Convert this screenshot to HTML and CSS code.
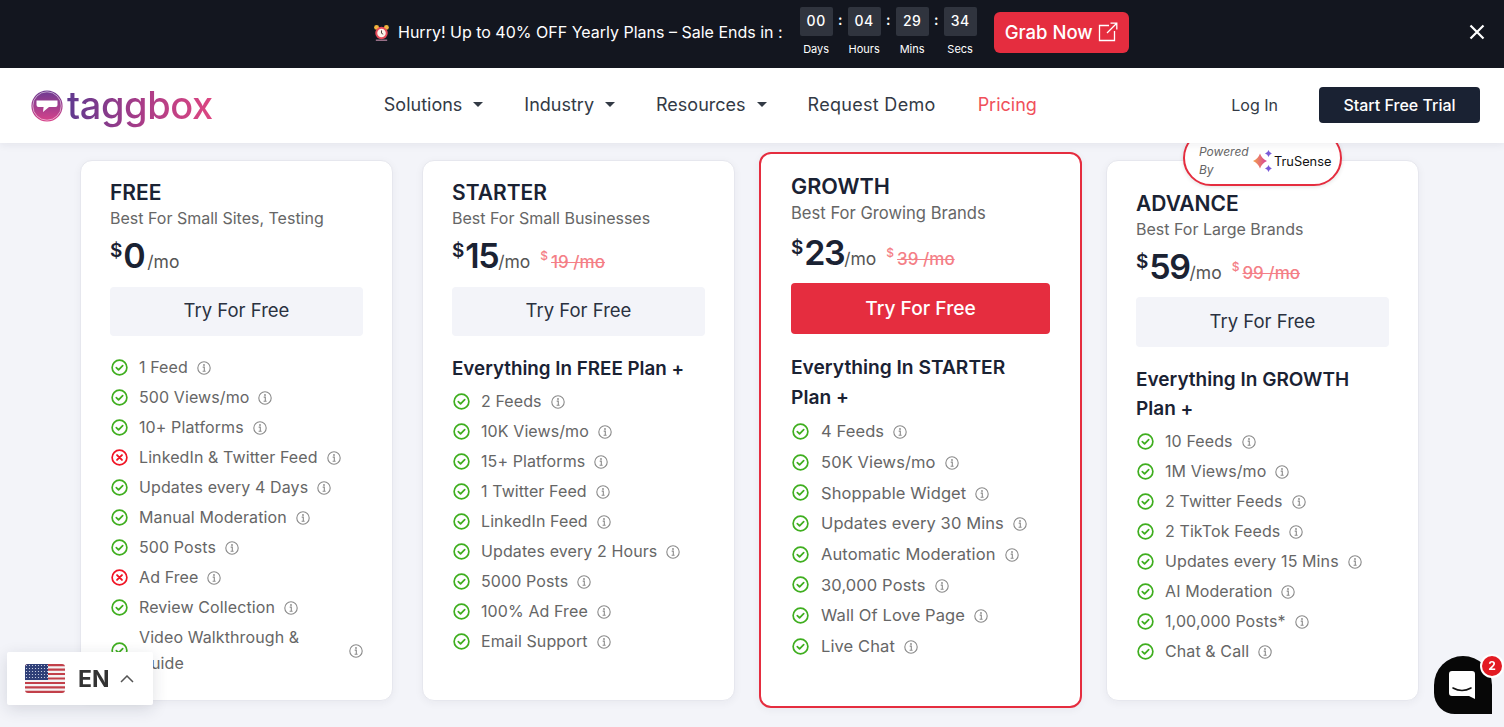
FILE: index.html
```html
<!DOCTYPE html>
<html lang="en">
<head>
<meta charset="utf-8">
<title>Taggbox Pricing</title>
<link rel="stylesheet" href="styles.css">
</head>
<body>
<svg class="sprite" width="0" height="0" aria-hidden="true">
  <symbol id="check" viewBox="0 0 18 18"><circle cx="9" cy="9" r="7.8" fill="none" stroke="#3fae1f" stroke-width="1.8"/><path d="M5.600 9.200l2.400 2.400 4.400-4.600" fill="none" stroke="#3fae1f" stroke-width="1.8" stroke-linecap="round" stroke-linejoin="round"/></symbol>
  <symbol id="cross" viewBox="0 0 18 18"><circle cx="9" cy="9" r="7.8" fill="none" stroke="#f01424" stroke-width="1.8"/><path d="M6.400 6.400l5.200 5.200M11.600 6.400l-5.200 5.200" fill="none" stroke="#f01424" stroke-width="2" stroke-linecap="round"/></symbol>
  <symbol id="info" viewBox="0 0 14 14"><circle cx="7" cy="7" r="6.200" fill="none" stroke="#8a8a8a" stroke-width="1.100"/><path d="M5.700 6.100H7.300V10M5.600 10.200H8.600" fill="none" stroke="#8a8a8a" stroke-width="1.100"/><circle cx="7" cy="4" r=".9" fill="#8a8a8a"/></symbol>
</svg>

<div class="promo">
  <svg class="clock" viewBox="0 0 18 18" width="17" height="17" aria-hidden="true">
    <circle cx="3.800" cy="3.600" r="2.600" fill="#f3b63f"/><circle cx="14.200" cy="3.600" r="2.600" fill="#f3b63f"/>
    <path d="M3 16.600h12v1H3z" fill="#e9a7c8"/>
    <circle cx="9" cy="9.600" r="6.600" fill="#e84b5a"/><circle cx="9" cy="9.600" r="4.500" fill="#fdf3ea"/>
    <path d="M9 6.800v3l1.800 1" stroke="#4a3a3a" stroke-width="1" fill="none"/>
  </svg>
  <span class="promo-text">Hurry! Up to 40% OFF Yearly Plans – Sale Ends in :</span>
  <div class="timer">
    <div class="unit"><b>00</b><small>Days</small></div><i>:</i>
    <div class="unit"><b>04</b><small>Hours</small></div><i>:</i>
    <div class="unit"><b>29</b><small>Mins</small></div><i>:</i>
    <div class="unit"><b>34</b><small>Secs</small></div>
  </div>
  <a class="grab">Grab Now
    <svg viewBox="0 0 20 20" width="20" height="20" aria-hidden="true"><path d="M11 3.500H1.500v15h15V9M9 11L18.500 1.500M12.500 1.200h6.300v6.300" fill="none" stroke="#fff" stroke-width="1.300"/></svg>
  </a>
  <svg class="close" viewBox="0 0 16 16" width="16" height="16" aria-hidden="true"><path d="M1.500 1.500l13 13M14.500 1.500l-13 13" stroke="#fff" stroke-width="2.200"/></svg>
</div>

<header class="header">
  <a class="logo">
    <svg viewBox="0 0 32 32" width="32" height="32" aria-hidden="true">
      <defs><linearGradient id="lg" x1="0" y1="0" x2="0" y2="1"><stop offset="0" stop-color="#6b3a92"/><stop offset="1" stop-color="#d9438a"/></linearGradient></defs>
      <circle cx="16" cy="16" r="15.600" fill="url(#lg)"/>
      <circle cx="16" cy="16" r="14.200" fill="none" stroke="#fff" stroke-opacity=".75" stroke-width=".7"/>
      <path d="M5.500 10.500h21v4.600q0 2-2 2h-6.500l-6 5 .6-5H7.500q-2 0-2-2z" fill="#fff"/>
    </svg>
    <span class="logo-text">taggbox</span>
  </a>
  <nav class="nav">
    <a class="drop">Solutions</a>
    <a class="drop">Industry</a>
    <a class="drop">Resources</a>
    <a class="demo">Request Demo</a>
    <a class="active">Pricing</a>
  </nav>
  <div class="actions">
    <a class="login">Log In</a>
    <a class="trial">Start Free Trial</a>
  </div>
</header>

<main class="plans">
  <section class="card card-free">
    <h2>FREE</h2>
    <p class="sub">Best For Small Sites, Testing</p>
    <div class="price"><sup>$</sup><strong>0</strong><span>/mo</span></div>
    <a class="try">Try For Free</a>
    <ul class="feats first">
      <li><svg class="ic"><use href="#check"/></svg><span>1 Feed</span><svg class="inf"><use href="#info"/></svg></li>
      <li><svg class="ic"><use href="#check"/></svg><span>500 Views/mo</span><svg class="inf"><use href="#info"/></svg></li>
      <li><svg class="ic"><use href="#check"/></svg><span>10+ Platforms</span><svg class="inf"><use href="#info"/></svg></li>
      <li><svg class="ic"><use href="#cross"/></svg><span>LinkedIn &amp; Twitter Feed</span><svg class="inf"><use href="#info"/></svg></li>
      <li><svg class="ic"><use href="#check"/></svg><span>Updates every 4 Days</span><svg class="inf"><use href="#info"/></svg></li>
      <li><svg class="ic"><use href="#check"/></svg><span>Manual Moderation</span><svg class="inf"><use href="#info"/></svg></li>
      <li><svg class="ic"><use href="#check"/></svg><span>500 Posts</span><svg class="inf"><use href="#info"/></svg></li>
      <li><svg class="ic"><use href="#cross"/></svg><span>Ad Free</span><svg class="inf"><use href="#info"/></svg></li>
      <li><svg class="ic"><use href="#check"/></svg><span>Review Collection</span><svg class="inf"><use href="#info"/></svg></li>
      <li class="wrap"><svg class="ic"><use href="#check"/></svg><span>Video Walkthrough &amp;<br>Guide</span><svg class="inf"><use href="#info"/></svg></li>
    </ul>
  </section>

  <section class="card card-starter">
    <h2>STARTER</h2>
    <p class="sub">Best For Small Businesses</p>
    <div class="price"><sup>$</sup><strong>15</strong><span>/mo</span><em><sup>$</sup><s>19 /mo</s></em></div>
    <a class="try">Try For Free</a>
    <h3>Everything In FREE Plan +</h3>
    <ul class="feats">
      <li><svg class="ic"><use href="#check"/></svg><span>2 Feeds</span><svg class="inf"><use href="#info"/></svg></li>
      <li><svg class="ic"><use href="#check"/></svg><span>10K Views/mo</span><svg class="inf"><use href="#info"/></svg></li>
      <li><svg class="ic"><use href="#check"/></svg><span>15+ Platforms</span><svg class="inf"><use href="#info"/></svg></li>
      <li><svg class="ic"><use href="#check"/></svg><span>1 Twitter Feed</span><svg class="inf"><use href="#info"/></svg></li>
      <li><svg class="ic"><use href="#check"/></svg><span>LinkedIn Feed</span><svg class="inf"><use href="#info"/></svg></li>
      <li><svg class="ic"><use href="#check"/></svg><span>Updates every 2 Hours</span><svg class="inf"><use href="#info"/></svg></li>
      <li><svg class="ic"><use href="#check"/></svg><span>5000 Posts</span><svg class="inf"><use href="#info"/></svg></li>
      <li><svg class="ic"><use href="#check"/></svg><span>100% Ad Free</span><svg class="inf"><use href="#info"/></svg></li>
      <li><svg class="ic"><use href="#check"/></svg><span>Email Support</span><svg class="inf"><use href="#info"/></svg></li>
    </ul>
  </section>

  <section class="card card-growth">
    <h2>GROWTH</h2>
    <p class="sub">Best For Growing Brands</p>
    <div class="price"><sup>$</sup><strong>23</strong><span>/mo</span><em><sup>$</sup><s>39 /mo</s></em></div>
    <a class="try">Try For Free</a>
    <h3>Everything In STARTER<br>Plan +</h3>
    <ul class="feats">
      <li><svg class="ic"><use href="#check"/></svg><span>4 Feeds</span><svg class="inf"><use href="#info"/></svg></li>
      <li><svg class="ic"><use href="#check"/></svg><span>50K Views/mo</span><svg class="inf"><use href="#info"/></svg></li>
      <li><svg class="ic"><use href="#check"/></svg><span>Shoppable Widget</span><svg class="inf"><use href="#info"/></svg></li>
      <li><svg class="ic"><use href="#check"/></svg><span>Updates every 30 Mins</span><svg class="inf"><use href="#info"/></svg></li>
      <li><svg class="ic"><use href="#check"/></svg><span>Automatic Moderation</span><svg class="inf"><use href="#info"/></svg></li>
      <li><svg class="ic"><use href="#check"/></svg><span>30,000 Posts</span><svg class="inf"><use href="#info"/></svg></li>
      <li><svg class="ic"><use href="#check"/></svg><span>Wall Of Love Page</span><svg class="inf"><use href="#info"/></svg></li>
      <li><svg class="ic"><use href="#check"/></svg><span>Live Chat</span><svg class="inf"><use href="#info"/></svg></li>
    </ul>
  </section>

  <section class="card card-advance">
    <div class="powered">
      <span class="pw-label">Powered<br>By</span>
      <svg viewBox="1 0 21 22" width="21" height="22" aria-hidden="true">
        <defs><linearGradient id="sp" x1="0" y1="0" x2="1" y2="0"><stop offset="0" stop-color="#f5a34a"/><stop offset="1" stop-color="#d63f9a"/></linearGradient></defs>
        <path d="M8 3.500Q10 9 15 11Q10 13 8 18.500Q6 13 1 11Q6 9 8 3.500z" fill="url(#sp)"/>
        <path d="M16.500 0q.7 2.800 3.500 3.500q-2.800.7-3.500 3.500q-.7-2.800-3.500-3.500q2.800-.7 3.500-3.500zM16.500 15q.7 2.800 3.500 3.500q-2.800.7-3.500 3.500q-.7-2.800-3.500-3.500q2.800-.7 3.500-3.500z" fill="#7a5ad8"/>
      </svg>
      <span class="pw-name">TruSense</span>
    </div>
    <h2>ADVANCE</h2>
    <p class="sub">Best For Large Brands</p>
    <div class="price"><sup>$</sup><strong>59</strong><span>/mo</span><em><sup>$</sup><s>99 /mo</s></em></div>
    <a class="try">Try For Free</a>
    <h3>Everything In GROWTH<br>Plan +</h3>
    <ul class="feats">
      <li><svg class="ic"><use href="#check"/></svg><span>10 Feeds</span><svg class="inf"><use href="#info"/></svg></li>
      <li><svg class="ic"><use href="#check"/></svg><span>1M Views/mo</span><svg class="inf"><use href="#info"/></svg></li>
      <li><svg class="ic"><use href="#check"/></svg><span>2 Twitter Feeds</span><svg class="inf"><use href="#info"/></svg></li>
      <li><svg class="ic"><use href="#check"/></svg><span>2 TikTok Feeds</span><svg class="inf"><use href="#info"/></svg></li>
      <li><svg class="ic"><use href="#check"/></svg><span>Updates every 15 Mins</span><svg class="inf"><use href="#info"/></svg></li>
      <li><svg class="ic"><use href="#check"/></svg><span>AI Moderation</span><svg class="inf"><use href="#info"/></svg></li>
      <li><svg class="ic"><use href="#check"/></svg><span>1,00,000 Posts*</span><svg class="inf"><use href="#info"/></svg></li>
      <li><svg class="ic"><use href="#check"/></svg><span>Chat &amp; Call</span><svg class="inf"><use href="#info"/></svg></li>
    </ul>
  </section>
</main>

<div class="lang">
  <svg class="flag" viewBox="0 0 40 29" width="40" height="29" aria-hidden="true">
    <defs><clipPath id="fc"><rect width="40" height="29" rx="3"/></clipPath>
    <pattern id="st" width="3" height="3" patternUnits="userSpaceOnUse"><rect width="3" height="3" fill="#2f3f78"/><circle cx="1.500" cy="1.500" r=".6" fill="#dfe3f0"/></pattern></defs>
    <g clip-path="url(#fc)">
      <rect width="40" height="29" fill="#f4f4f4"/>
      <path d="M0 1.100h40M0 5.600h40M0 10h40M0 14.500h40M0 19h40M0 23.400h40M0 27.900h40" stroke="#c2404a" stroke-width="2.200"/>
      <rect width="23" height="16" fill="url(#st)"/>
    </g>
  </svg>
  <span class="lang-code">EN</span>
  <svg viewBox="0 0 14 8" width="14" height="8" aria-hidden="true"><path d="M1 7l6-6 6 6" fill="none" stroke="#555" stroke-width="1.500"/></svg>
</div>

<div class="chat">
  <svg viewBox="0 0 26 28" width="26" height="28" aria-hidden="true"><path d="M3 0h20q3 0 3 3v25l-6-3H3q-3 0-3-3V3q0-3 3-3z" fill="#fff"/><path d="M4 17q9 5 18 0" fill="none" stroke="#111" stroke-width="1.600" stroke-linecap="round"/></svg>
</div>
<span class="chat-badge">2</span>
</body>
</html>
```

FILE: styles.css
```css
* { box-sizing: border-box; }
html, body { margin: 0; padding: 0; }
body {
  height: 727px;
  overflow: hidden;
  background: #f3f4f9;
  font-family: Inter, "Noto Sans", sans-serif;
  color: #1a2233;
}
a { display: block; }
.sprite { position: absolute; }

/* promo bar */
.promo {
  height: 68px;
  background: #13161f;
  color: #fff;
  display: flex;
  align-items: center;
  padding: 0 0 4px 373px;
  position: relative;
  z-index: 3;
}
.clock { flex: none; }
.promo-text { margin-left: 8px; font-size: 16px; white-space: nowrap; }
.timer { display: flex; margin: -2px 0 0 17px; align-items: flex-start; }
.timer i { width: 15px; text-align: center; font-style: normal; font-size: 14px; font-weight: 600; line-height: 26px; }
.unit { width: 33px; display: flex; flex-direction: column; align-items: center; }
.unit b {
  width: 33px; height: 29px; background: #30343e; border-radius: 2px;
  font-weight: 500; font-size: 14px; line-height: 28px; text-align: center; letter-spacing: .5px;
}
.unit small { font-size: 11px; line-height: 14px; margin-top: 6px; }
.grab {
  margin-left: 17px; width: 135px; height: 41px; background: #e52d3f; border-radius: 6px;
  display: flex; align-items: center; justify-content: center; gap: 5px;
  font-size: 18.500px; font-weight: 500;
}
.close { position: absolute; left: 1469px; top: 24px; }

/* header */
.header {
  height: 75px; background: #fff;
  display: flex; align-items: center;
  padding: 0 24px 2px 30px;
  position: relative; z-index: 2;
  box-shadow: 0 2px 8px rgba(30, 35, 60, .07);
}
.logo { display: flex; align-items: center; gap: 4px; }
.logo svg { margin: 2px 0 0 1px; }
.logo-text {
  font-size: 38px; font-weight: 500; line-height: 50px; letter-spacing: -.4px;
  background: linear-gradient(90deg, #5f3a8f 0%, #a83c88 50%, #dd4681 100%);
  -webkit-background-clip: text; background-clip: text; color: transparent;
}
.nav { display: flex; margin-left: 171px; gap: 41px; font-size: 18px; color: #333a45; }
.nav .drop { display: flex; align-items: center; gap: 11px; }
.nav .drop::after {
  content: ""; border-left: 5px solid transparent; border-right: 5px solid transparent;
  border-top: 5px solid #333a45;
}
.nav .demo { letter-spacing: .3px; }
.nav .active { color: #f0505a; margin-left: 1px; }
.actions { margin-left: auto; display: flex; align-items: center; gap: 41px; }
.login { font-size: 16px; color: #333a45; }
.trial {
  width: 161px; height: 36px; line-height: 36px; text-align: center;
  background: #1a2233; color: #fff; border-radius: 4px; font-size: 16px; font-weight: 500;
}

/* plans */
.plans { display: flex; gap: 24px; padding: 9px 0 0 80px; align-items: flex-start; }
.card {
  width: 313px; height: 541px; margin-top: 8px;
  background: #fff; border: 1px solid #e6e7ee; border-radius: 12px;
  padding: 20px 29px 0;
  box-shadow: 0 2px 8px rgba(30, 35, 60, .05);
  position: relative;
}
.card-free { margin-right: 5px; }
.card-growth { width: 323px; height: 556px; margin-top: 0; border: 2px solid #e52d3f; padding: 20px 30px 0; }
.card-advance { padding-top: 31px; }

h2 { margin: 0; font-size: 21px; line-height: 24px; font-weight: 600; color: #1a2233; }
.card-growth h2 { font-size: 21.600px; }
.sub { margin: 1px 0 0; font-size: 16px; line-height: 24px; color: #666; }
.card-growth .sub { margin-top: 3px; font-size: 16.600px; }
.price { display: flex; align-items: baseline; margin-top: 6px; height: 40px; color: #1a2233; }
.card-growth .price { margin-top: 8px; }
.price sup { font-size: 19px; font-weight: 600; line-height: 1; align-self: flex-start; margin: 5px 1px 0 0; }
.price strong { font-size: 34px; font-weight: 600; line-height: 40px; letter-spacing: -1.500px; }
.price > span { font-size: 17.500px; color: #555; }
.card-free .price > span { margin-left: 3px; }
.price em { display: flex; align-items: baseline; font-style: normal; color: #f47f87; margin-left: 10px; font-weight: 500; }
.price em sup { font-size: 12px; font-weight: 500; align-self: auto; margin: 0; position: relative; top: -8px; }
.price em s { font-size: 17px; margin-left: 3px; }

.try {
  margin-top: 11px; height: 49px; line-height: 47px; text-align: center;
  background: #f3f4f9; border-radius: 4px; font-size: 18.500px; color: #2a3140;
}
.card-growth .try { height: 51px; line-height: 50px; margin-top: 10px; background: #e52d3f; color: #fff; font-weight: 500; font-size: 19.200px; }
.card-advance .try { height: 50px; line-height: 49px; margin-top: 10px; }

h3 { margin: 18px 0 0; font-size: 18.800px; line-height: 30px; font-weight: 600; color: #1a2233; white-space: nowrap; }
.card-growth h3 { margin-top: 18px; font-size: 19.200px; }
.card-advance h3 { margin-top: 18px; line-height: 29px; font-size: 19px; }

.feats { list-style: none; margin: 3px 0 0; padding: 0; }
.feats.first { margin-top: 16px; }
.card-starter .feats { margin-top: 2px; }
.card-growth .feats { margin-top: 4px; }
.feats li { display: flex; align-items: center; height: 30px; font-size: 16px; letter-spacing: .1px; color: #666; }
.card-growth .feats li { height: 30.700px; font-size: 16.500px; }
.ic { width: 17px; height: 17px; flex: none; margin: 0 11px 0 1px; }
.card-growth .ic { margin-right: 12px; }
.inf { width: 14px; height: 14px; flex: none; margin: 2px 0 0 9px; }
.feats li.wrap { height: 56px; line-height: 26px; }
.wrap span { flex: 1; }

/* floating */
.powered {
  position: absolute; left: 76px; top: -31px; width: 159px; height: 56px;
  background: #fff; border: 2px solid #e52d3f; border-radius: 28px;
  display: flex; align-items: flex-end; padding: 0 0 5px 14px;
  box-shadow: 0 1px 4px rgba(0, 0, 0, .12);
}
.pw-label { font-size: 12px; line-height: 18px; font-style: italic; color: #666; width: 54px; }
.powered svg { margin: 0 0 7px 0; flex: none; }
.pw-name { font-size: 12.800px; color: #111; margin: 0 0 8px 0; line-height: 18px; }

.lang {
  position: fixed; left: 7px; top: 652px; width: 146px; height: 53px;
  background: #fff; border-radius: 2px;
  display: flex; align-items: center; padding-left: 18px;
  box-shadow: 0 4px 16px rgba(30, 35, 60, .14);
  z-index: 5;
}
.flag { flex: none; }
.lang-code { font-size: 23px; font-weight: 700; color: #333; margin: 0 10px 0 13px; }

.chat {
  position: fixed; left: 1434px; top: 656px; width: 58px; height: 58px;
  padding-right: 2px;
  background: #070707; border-radius: 50% 50% 0 36%;
  display: flex; align-items: center; justify-content: center;
  z-index: 5;
}
.chat-badge {
  position: fixed; left: 1482px; top: 656px; width: 20px; height: 20px;
  background: #e31b23; color: #fff; border-radius: 50%;
  font-size: 12px; font-weight: 700; line-height: 20px; text-align: center;
  box-shadow: 0 0 0 2px #fff;
  z-index: 6;
}
```
